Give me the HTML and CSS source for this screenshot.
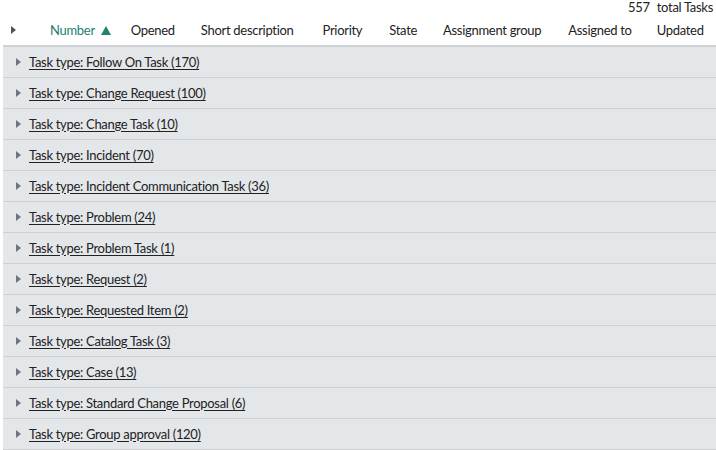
FILE: index.html
```html
<!DOCTYPE html>
<html>
<head>
<meta charset="utf-8">
<link rel="stylesheet" href="styles.css">
</head>
<body>
<div class="page">
  <div class="total"><span class="count">557</span><span>total Tasks</span></div>
  <div class="head">
    <span class="hcaret"></span>
    <span class="col num">Number <span class="sort"></span></span>
    <span class="col c-opened">Opened</span>
    <span class="col c-short">Short description</span>
    <span class="col c-prio">Priority</span>
    <span class="col c-state">State</span>
    <span class="col c-group">Assignment group</span>
    <span class="col c-assigned">Assigned to</span>
    <span class="col c-updated">Updated</span>
  </div>
  <div class="rows">
    <div class="row"><span class="caret"></span><a class="label">Task type: Follow On Task (170)</a></div>
    <div class="row"><span class="caret"></span><a class="label">Task type: Change Request (100)</a></div>
    <div class="row"><span class="caret"></span><a class="label">Task type: Change Task (10)</a></div>
    <div class="row"><span class="caret"></span><a class="label">Task type: Incident (70)</a></div>
    <div class="row"><span class="caret"></span><a class="label">Task type: Incident Communication Task (36)</a></div>
    <div class="row"><span class="caret"></span><a class="label">Task type: Problem (24)</a></div>
    <div class="row"><span class="caret"></span><a class="label">Task type: Problem Task (1)</a></div>
    <div class="row"><span class="caret"></span><a class="label">Task type: Request (2)</a></div>
    <div class="row"><span class="caret"></span><a class="label">Task type: Requested Item (2)</a></div>
    <div class="row"><span class="caret"></span><a class="label">Task type: Catalog Task (3)</a></div>
    <div class="row"><span class="caret"></span><a class="label">Task type: Case (13)</a></div>
    <div class="row"><span class="caret"></span><a class="label">Task type: Standard Change Proposal (6)</a></div>
    <div class="row"><span class="caret"></span><a class="label">Task type: Group approval (120)</a></div>
  </div>
</div>
</body>
</html>
```
FILE: styles.css
```css
html, body {
  margin: 0;
  padding: 0;
  background: #ffffff;
}
body {
  font-family: "Lato", "Open Sans", sans-serif;
  color: #222222;
  font-size: 13px;
  letter-spacing: -0.3px;
}
.page {
  width: 716px;
  height: 450px;
  overflow: hidden;
}
.total {
  height: 14px;
  display: flex;
  justify-content: flex-end;
  align-items: center;
  gap: 7px;
  padding-right: 3px;
  font-size: 13px;
  line-height: 13px;
}
.head {
  height: 33px;
  box-sizing: border-box;
  display: flex;
  align-items: center;
  border-bottom: 2px solid #cfd2d5;
  margin-left: 3px;
  padding-top: 1px;
}
.hcaret {
  width: 0;
  height: 0;
  border-top: 4px solid transparent;
  border-bottom: 4px solid transparent;
  border-left: 5px solid #4b535c;
  margin-left: 8px;
  margin-right: 34px;
}
.col {
  white-space: nowrap;
}
.num {
  color: #24806f;
  display: flex;
  align-items: center;
  gap: 6px;
}
.sort {
  width: 0;
  height: 0;
  border-left: 5px solid transparent;
  border-right: 5px solid transparent;
  border-bottom: 9px solid #24806f;
}
.c-opened { margin-left: 20px; }
.c-short { margin-left: 26px; }
.c-prio { margin-left: 29px; }
.c-state { margin-left: 27px; }
.c-group { margin-left: 26px; }
.c-assigned { margin-left: 27px; }
.c-updated { margin-left: 25px; }
.rows {
  margin-left: 3px;
  background: #e4e7ea;
}
.row {
  height: 30px;
  border-bottom: 1px solid #cdd1d4;
  display: flex;
  align-items: center;
}
.caret {
  width: 0;
  height: 0;
  border-top: 4px solid transparent;
  border-bottom: 4px solid transparent;
  border-left: 5px solid #6d7580;
  margin-left: 13px;
  margin-right: 8px;
}
.label {
  color: #222222;
  text-decoration: underline;
  text-underline-offset: 2px;
  padding-bottom: 1px;
}
```
